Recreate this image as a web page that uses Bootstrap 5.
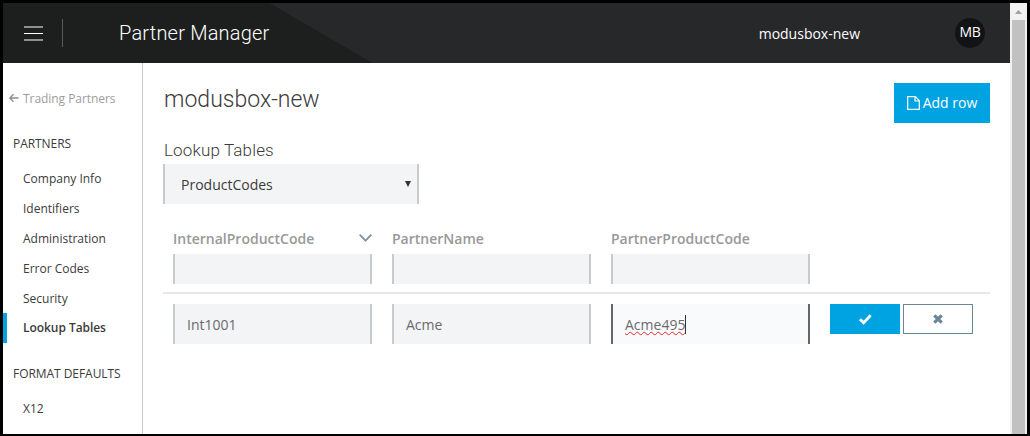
<!DOCTYPE html>
<html lang="en">
<head>
<meta charset="utf-8">
<meta name="viewport" content="width=device-width, initial-scale=1">
<title>Partner Manager</title>
<link href="https://cdn.jsdelivr.net/npm/bootstrap@5.3.0/dist/css/bootstrap.min.css" rel="stylesheet">
<style>
body{font-family:"Open Sans","Noto Sans",sans-serif;font-size:14px;line-height:20px;color:#3b3b3b;background:#fff}
.frame{height:436px;border:3px solid #000;border-bottom-width:2px}
.topbar{height:60px;background:linear-gradient(to bottom left,#27282a 50%,#1d1f1e 50.4%) 267px 0/103px 60px no-repeat,linear-gradient(90deg,#1d1f1e 267px,#27282a 267px);color:#fff}
.menu-btn{width:19px;height:15px;margin-left:21px}
.rule{width:1px;height:28px;background:#59595a;margin-left:19px}
.din{font-family:Roboto,sans-serif;font-weight:300}
.brand{font-size:20px;margin-left:56px;letter-spacing:.2px}
.avatar{width:30px;height:30px;background:#121315;margin-right:25px;line-height:1;padding-bottom:2px;letter-spacing:-.2px}
.tenant{margin-right:95px;padding-top:2px}
.side{width:140px;border-right:1px solid #c9c9c9;font-size:12px;padding-top:20px}
.side .item,.side .head,.side .back{height:30px;line-height:32px;white-space:nowrap}
.side .item{padding-left:20px}
.side .head{padding-left:10px;margin:15px 0 5px;letter-spacing:-.05px}
.side .back{color:#9d9d9d;padding:2px 0 0 6px;letter-spacing:-.05px}
.back svg{margin-bottom:2px}
.side .active{border-left:4px solid #00a3e1;padding-left:16px;font-weight:600;line-height:30px;letter-spacing:-.05px}
.main{padding:20px 20px 0}
.page-title{font-size:23px;line-height:34px;letter-spacing:.02px;padding-left:1px}
.sub-title{font-size:17px;line-height:24px;letter-spacing:.15px;margin-top:15px;padding:0 0 2px 1px}
.sq-btn{background:#00a3e1;color:#fff;border:0;border-radius:0}
.add-btn{width:96px;height:40px;gap:3px}
.field{background:#f3f4f6;border:solid #c8cacc;border-width:0 2px;height:40px;display:flex;align-items:center;padding-left:12px;padding-top:1px;color:#6b6b6b}
.picker{width:256px;color:#3b3b3b;padding-left:16px;padding-right:6px}
.picker svg{margin-bottom:2px}
.filter{height:30px}
.cell{width:219px;padding:0 10px}
.label{color:#989898;font-weight:600;height:20px;margin-bottom:5px}
.label svg{margin-bottom:2px}
.grid-head{margin-top:25px;padding-bottom:8px;border-bottom:2px solid #e8e8e8}
.grid-row{padding-top:10px}
.field.editing{background:#f9fafc;border-color:#666}
.typo-text{text-decoration:underline wavy #e8232a 1px;text-underline-offset:1px;text-decoration-skip-ink:none}
.caret{width:1px;height:19px;background:#333}
.actions{gap:3px;padding-left:10px}
.act{width:70px;height:30px}
.cancel{background:#fff;border:1px solid #688797}
.scroll{width:17px;background:#f1f1f1}
.thumb{width:13px;background:#c1c1c1}
</style>
</head>
<body>
<div class="frame d-flex overflow-hidden">
  <div class="flex-grow-1 d-flex flex-column">
    <header class="topbar d-flex align-items-center flex-shrink-0">
      <svg class="menu-btn" viewBox="0 0 19 15"><path d="M0 1h19M0 7.5h19M0 14h19" stroke="#fff" stroke-width="1.2"/></svg>
      <div class="rule"></div>
      <div class="din brand">Partner Manager</div>
      <div class="tenant ms-auto">modusbox-new</div>
      <div class="avatar rounded-circle d-flex align-items-center justify-content-center">MB</div>
    </header>
    <div class="d-flex flex-grow-1">
      <nav class="side flex-shrink-0">
        <div class="back d-flex align-items-center"><svg width="10" height="10" viewBox="0 0 10 10" class="me-1" fill="none" stroke="#8d8d8d" stroke-width="1.3"><path d="M9.5 5H1M4.5 1.3L.9 5l3.6 3.7"/></svg>Trading Partners</div>
        <div class="head">PARTNERS</div>
        <div class="item">Company Info</div>
        <div class="item">Identifiers</div>
        <div class="item">Administration</div>
        <div class="item">Error Codes</div>
        <div class="item">Security</div>
        <div class="item active">Lookup Tables</div>
        <div class="head">FORMAT DEFAULTS</div>
        <div class="item">X12</div>
      </nav>
      <main class="main flex-grow-1">
        <div class="d-flex justify-content-between">
          <div class="din page-title">modusbox-new</div>
          <button class="sq-btn add-btn d-flex align-items-center justify-content-center p-0"><svg width="13" height="14" viewBox="0 0 13 14" fill="none" stroke="#fff" stroke-width="1.2"><path d="M.7.7h7.6l4 4v8.6H.7zM8 .7V5h4.3"/></svg>Add row</button>
        </div>
        <div class="din sub-title">Lookup Tables</div>
        <div class="field picker justify-content-between"><span>ProductCodes</span><svg width="6" height="6" viewBox="0 0 6 6"><path d="M0 0h6L3 6z" fill="#333"/></svg></div>
        <div class="grid-head d-flex">
          <div class="cell"><div class="label d-flex justify-content-between align-items-center"><span>InternalProductCode</span><svg width="13" height="8" viewBox="0 0 13 8" fill="none" stroke="#7e94a2" stroke-width="1.8"><path d="M.7.7l5.8 6 5.8-6"/></svg></div><div class="field filter"></div></div>
          <div class="cell"><div class="label">PartnerName</div><div class="field filter"></div></div>
          <div class="cell"><div class="label">PartnerProductCode</div><div class="field filter"></div></div>
        </div>
        <div class="d-flex grid-row">
          <div class="cell"><div class="field">Int1001</div></div>
          <div class="cell"><div class="field">Acme</div></div>
          <div class="cell"><div class="field editing"><span class="typo-text">Acme495</span><span class="caret"></span></div></div>
          <div class="d-flex actions">
            <button class="sq-btn act p-0 d-flex align-items-center justify-content-center"><svg width="13" height="11" viewBox="0 0 13 11"><path d="M0 6.2l2-2 2.6 2.5L10.7.3l2 2L4.7 10.7z" fill="#fff"/></svg></button>
            <button class="act cancel p-0 d-flex align-items-center justify-content-center"><svg width="10" height="10" viewBox="0 0 10 10"><path d="M1.3 1.3l7.4 7.4M8.7 1.3L1.3 8.7" stroke="#688797" stroke-width="3.2"/></svg></button>
          </div>
        </div>
      </main>
    </div>
  </div>
  <div class="scroll d-flex flex-column align-items-center flex-shrink-0">
    <svg width="17" height="17" viewBox="0 0 17 17" class="flex-shrink-0"><path d="M5 11l3.5-4 3.5 4z" fill="#a0a0a0"/></svg>
    <div class="thumb flex-grow-1"></div>
  </div>
</div>
<script src="https://cdn.jsdelivr.net/npm/bootstrap@5.3.0/dist/js/bootstrap.bundle.min.js"></script>
</body>
</html>
